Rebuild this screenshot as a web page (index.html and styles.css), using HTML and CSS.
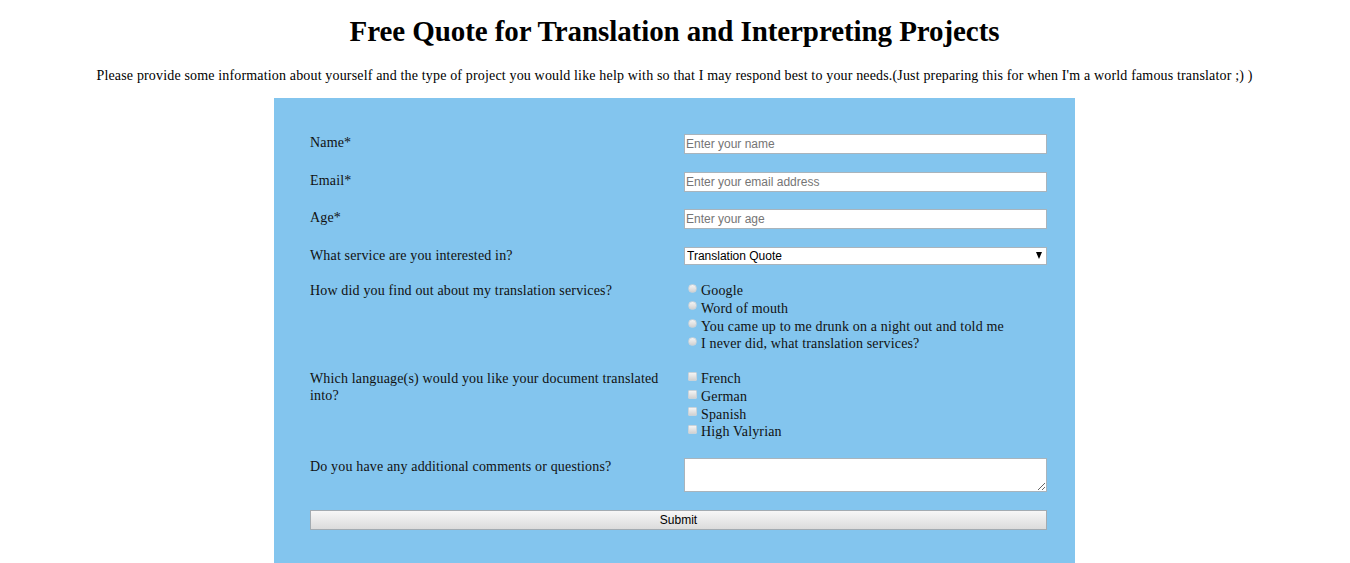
FILE: index.html
```html
<!DOCTYPE html>
<html lang="en">
<head>
<meta charset="utf-8">
<title>Free Quote</title>
<link rel="stylesheet" href="styles.css">
</head>
<body>
<h1 class="title">Free Quote for Translation and Interpreting Projects</h1>
<p class="intro">Please provide some information about yourself and the type of project you would like help with so that I may respond best to your needs.(Just preparing this for when I'm a world famous translator ;) )</p>
<form class="quote">
  <div class="row">
    <label class="lbl" for="name">Name*</label>
    <input class="field" id="name" type="text" placeholder="Enter your name">
  </div>
  <div class="row">
    <label class="lbl" for="email">Email*</label>
    <input class="field" id="email" type="text" placeholder="Enter your email address">
  </div>
  <div class="row">
    <label class="lbl" for="age">Age*</label>
    <input class="field" id="age" type="text" placeholder="Enter your age">
  </div>
  <div class="row">
    <label class="lbl" for="service">What service are you interested in?</label>
    <span class="select-wrap">
      <select class="select" id="service">
        <option>Translation Quote</option>
        <option>Interpreting Quote</option>
      </select>
    </span>
  </div>
  <div class="row">
    <span class="lbl">How did you find out about my translation services?</span>
    <div class="options">
      <label class="opt"><input class="radio" type="radio" name="src">Google</label>
      <label class="opt"><input class="radio" type="radio" name="src">Word of mouth</label>
      <label class="opt"><input class="radio" type="radio" name="src">You came up to me drunk on a night out and told me</label>
      <label class="opt"><input class="radio" type="radio" name="src">I never did, what translation services?</label>
    </div>
  </div>
  <div class="row">
    <span class="lbl">Which language(s) would you like your document translated into?</span>
    <div class="options">
      <label class="opt"><input class="check" type="checkbox">French</label>
      <label class="opt"><input class="check" type="checkbox">German</label>
      <label class="opt"><input class="check" type="checkbox">Spanish</label>
      <label class="opt"><input class="check" type="checkbox">High Valyrian</label>
    </div>
  </div>
  <div class="row">
    <label class="lbl" for="comments">Do you have any additional comments or questions?</label>
    <textarea class="area" id="comments"></textarea>
  </div>
  <button class="submit" type="button">Submit</button>
</form>
</body>
</html>
```

FILE: styles.css
```css
html, body {
  margin: 0;
  padding: 0;
  background: #ffffff;
}
body {
  font-family: "Liberation Serif", "Times New Roman", serif;
  font-size: 14px;
  letter-spacing: 0.16px;
  color: #111;
  padding-top: 1px;
  padding-right: 1px;
}
.title {
  font-size: 29px;
  font-weight: bold;
  letter-spacing: -0.08px;
  text-align: center;
  margin: 13px 0 0;
  line-height: 34px;
  color: #000;
}
.intro {
  text-align: center;
  margin: 19px 0 13px;
  line-height: 18px;
  color: #000;
}
.quote {
  width: 801px;
  margin: 0 auto;
  box-sizing: border-box;
  background: #83c5ee;
  padding: 36px 28px 40px 36px;
  min-height: 480px;
}
.row {
  display: grid;
  grid-template-columns: 374px 1fr;
  margin-bottom: 17.5px;
  align-items: start;
}
.lbl {
  display: block;
  line-height: 17px;
  padding-right: 10px;
}
.field {
  display: block;
  box-sizing: border-box;
  width: 100%;
  height: 20px;
  margin: 0;
  padding: 0 1px;
  border: 1px solid #a9b4bc;
  background: #fff;
  font-family: "Liberation Sans", Arial, sans-serif;
  font-size: 12px;
  letter-spacing: 0;
  color: #222;
  outline: none;
}
.field::placeholder {
  color: #757575;
}
.select-wrap {
  position: relative;
  display: block;
}
.select {
  display: block;
  box-sizing: border-box;
  width: 100%;
  height: 18px;
  margin: 0;
  padding: 0 2px;
  border: 1px solid #a9b4bc;
  background: #fff;
  font-family: "Liberation Sans", Arial, sans-serif;
  font-size: 12px;
  letter-spacing: 0;
  color: #000;
  appearance: none;
  -webkit-appearance: none;
  border-radius: 0;
  outline: none;
}
.select-wrap::after {
  content: "";
  position: absolute;
  right: 5px;
  top: 5px;
  width: 0;
  height: 0;
  border-left: 3.5px solid transparent;
  border-right: 3.5px solid transparent;
  border-top: 7px solid #000;
  pointer-events: none;
}
.options {
  display: flex;
  flex-direction: column;
}
.opt {
  display: flex;
  align-items: center;
  height: 17.67px;
  line-height: 17px;
  padding-left: 4px;
}
.radio, .check {
  appearance: none;
  -webkit-appearance: none;
  width: 9px;
  height: 9px;
  margin: 0 4px 5px 0;
  flex: none;
  background: linear-gradient(#f4f4f4, #d2d2d2);
  border: 1px solid #c9d3da;
  box-sizing: border-box;
}
.radio {
  border-radius: 50%;
}
.check {
  border-radius: 1px;
}
.area {
  display: block;
  box-sizing: border-box;
  width: 100%;
  height: 34px;
  margin: 0;
  border: 1px solid #a9b4bc;
  background: #fff;
  font-family: "Liberation Sans", Arial, sans-serif;
  font-size: 12px;
  resize: both;
  outline: none;
}
.submit {
  display: block;
  box-sizing: border-box;
  width: 100%;
  height: 20px;
  margin: 0;
  padding: 0;
  border: 1px solid #a3abb1;
  background: linear-gradient(#f7f7f7, #dcdcdc);
  font-family: "Liberation Sans", Arial, sans-serif;
  font-size: 12px;
  letter-spacing: 0;
  color: #000;
  border-radius: 0;
}
```
